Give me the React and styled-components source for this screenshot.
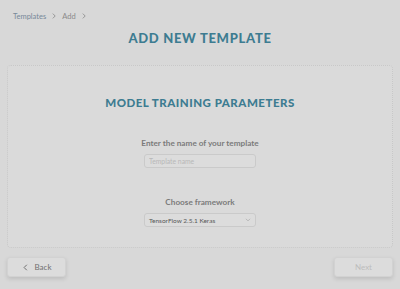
import React from 'react';
import styled, { createGlobalStyle } from 'styled-components';

const Global = createGlobalStyle`
  html, body {
    margin: 0;
    padding: 0;
    background: #d8d8d8;
    font-family: "Lato", "Liberation Sans", sans-serif;
  }
`;

const Page = styled.div`
  width: 400px;
  height: 289px;
  box-sizing: border-box;
  padding: 9px 7px 0 7px;
  display: flex;
  flex-direction: column;
  background: #d8d8d8;
`;

const Crumbs = styled.div`
  display: flex;
  align-items: center;
  gap: 5px;
  padding-left: 6px;
  height: 14px;
  font-size: 7.5px;
  color: #778899;

  span.current {
    color: #8a8a8a;
  }
`;

const Title = styled.h1`
  margin: 7px 0 0 0;
  text-align: center;
  font-family: "Lato", sans-serif;
  font-weight: 900;
  font-size: 13px;
  letter-spacing: 0.7px;
  color: #3d7c91;
`;

const Card = styled.section`
  margin-top: 19px;
  height: 183px;
  box-sizing: border-box;
  border: 1px dotted #c8c8c8;
  border-radius: 4px;
  background: #dadada;
  display: flex;
  flex-direction: column;
  align-items: center;
  padding-top: 30px;
`;

const Subtitle = styled.h2`
  margin: 0;
  font-family: "Lato", sans-serif;
  font-weight: 900;
  font-size: 11.5px;
  letter-spacing: 0.5px;
  color: #3d7c91;
`;

const Field = styled.div`
  display: flex;
  flex-direction: column;
  align-items: center;
  margin-top: ${p => p.$top}px;
  gap: 6px;
`;

const Label = styled.label`
  font-size: 8.2px;
  font-weight: 700;
  color: #7a7a7a;
`;

const Input = styled.input`
  width: 112px;
  height: 14px;
  box-sizing: border-box;
  border: 1px solid #cacaca;
  border-radius: 3px;
  background: #dcdcdc;
  padding: 0 4px;
  font-family: inherit;
  font-size: 6.8px;
  outline: none;

  &::placeholder {
    color: #b8b8b8;
  }
`;

const Select = styled.div`
  width: 112px;
  height: 14px;
  box-sizing: border-box;
  border: 1px solid #cacaca;
  border-radius: 3px;
  background: #dcdcdc;
  padding: 0 4px;
  display: flex;
  align-items: center;
  justify-content: space-between;
  font-size: 6.5px;
  color: #585858;
`;

const Footer = styled.div`
  display: flex;
  justify-content: space-between;
  margin-top: 9px;
`;

const Button = styled.button`
  width: 59px;
  height: 20px;
  border: 1px solid #d2d2d2;
  border-radius: 3px;
  background: #dcdcdc;
  box-shadow: 0 2px 4px rgba(0, 0, 0, 0.12);
  display: flex;
  align-items: center;
  justify-content: center;
  gap: 6px;
  font-family: inherit;
  font-size: 8px;
  color: ${p => (p.disabled ? '#bdbdbd' : '#6f6f6f')};
  padding: 0;
`;

const Chevron = ({ dir = 'right', size = 6, color = '#888' }) => (
  <svg width={size} height={size} viewBox="0 0 10 10">
    <path
      d={dir === 'left' ? 'M6.5 1.5 L3 5 L6.5 8.5' : dir === 'down' ? 'M2 3.5 L5 6.5 L8 3.5' : 'M3.5 1.5 L7 5 L3.5 8.5'}
      fill="none"
      stroke={color}
      strokeWidth="1.4"
      strokeLinecap="round"
      strokeLinejoin="round"
    />
  </svg>
);

export default function App() {
  return (
    <>
      <Global />
      <Page>
        <Crumbs>
          <span>Templates</span>
          <Chevron size={6} color="#8a8a8a" />
          <span className="current">Add</span>
          <Chevron size={6} color="#8a8a8a" />
        </Crumbs>
        <Title>ADD NEW TEMPLATE</Title>
        <Card>
          <Subtitle>MODEL TRAINING PARAMETERS</Subtitle>
          <Field $top={29}>
            <Label>Enter the name of your template</Label>
            <Input placeholder="Template name" />
          </Field>
          <Field $top={29}>
            <Label>Choose framework</Label>
            <Select>
              <span>TensorFlow 2.5.1 Keras</span>
              <Chevron dir="down" size={6} color="#b0b0b0" />
            </Select>
          </Field>
        </Card>
        <Footer>
          <Button>
            <Chevron dir="left" size={7} color="#6f6f6f" />
            Back
          </Button>
          <Button disabled>Next</Button>
        </Footer>
      </Page>
    </>
  );
}
